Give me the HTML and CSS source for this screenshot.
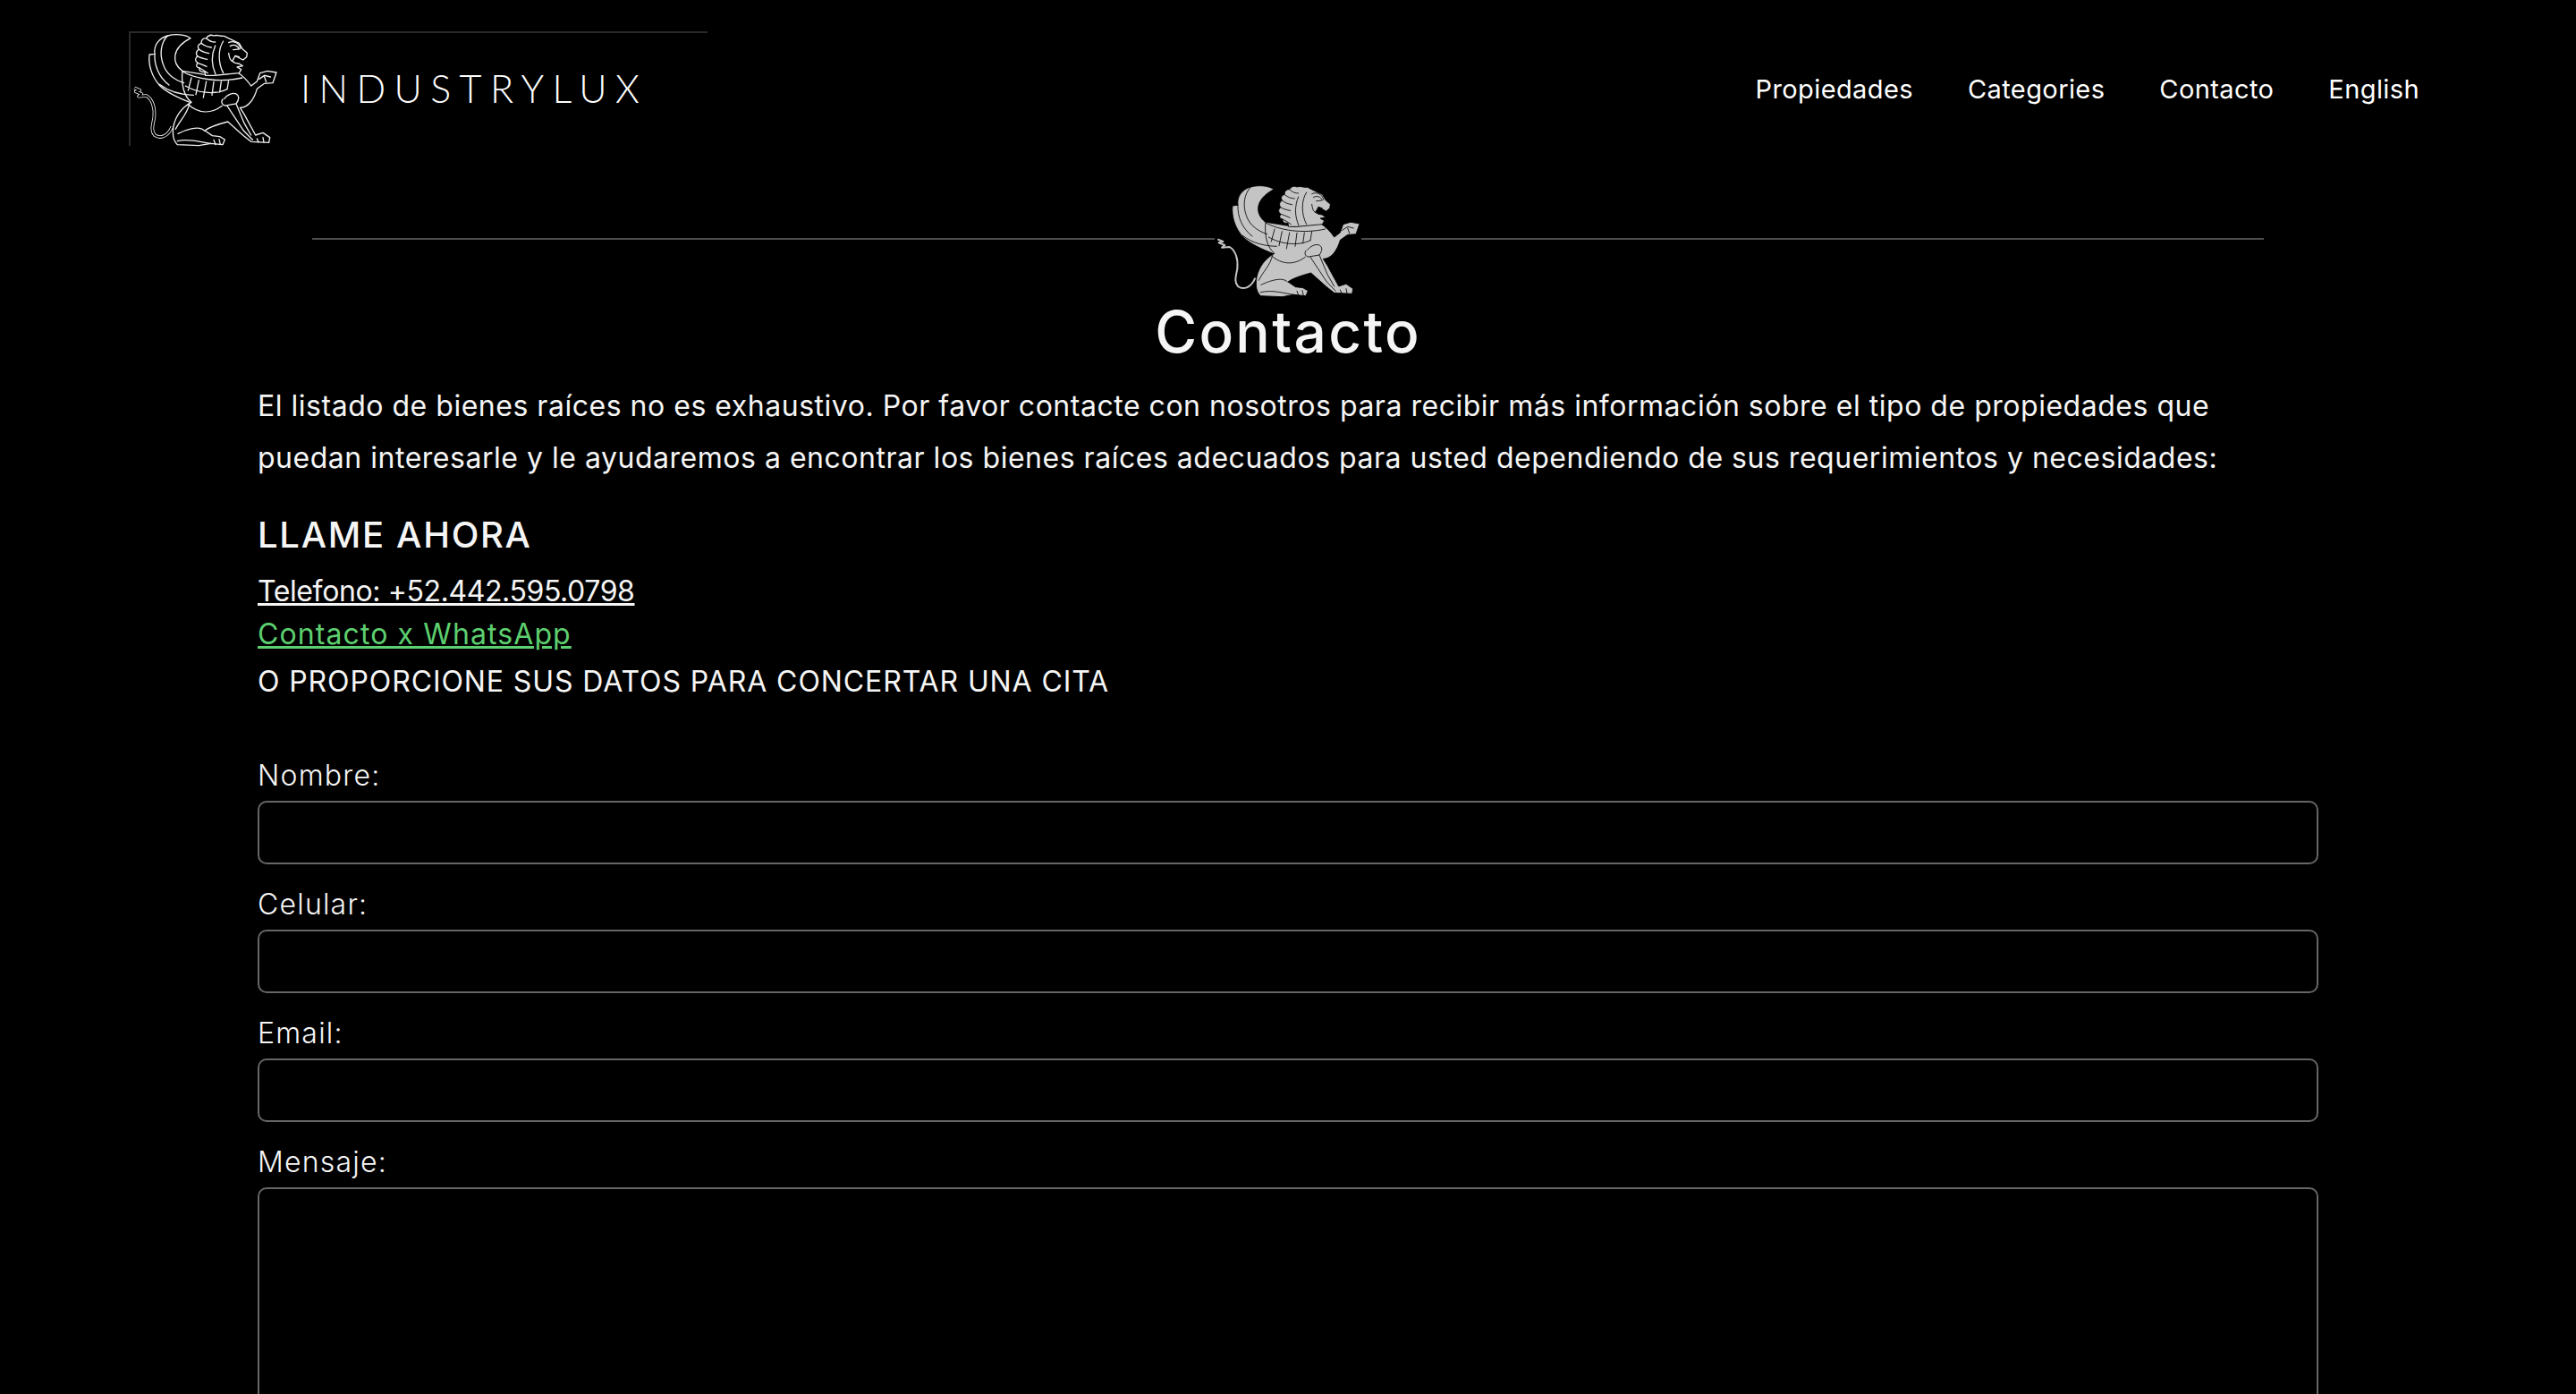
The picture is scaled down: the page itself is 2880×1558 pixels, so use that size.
FILE: index.html
```html
<!DOCTYPE html>
<html lang="es">
<head>
  <meta charset="UTF-8">
  <title>Contacto - Industrylux</title>
  <link rel="stylesheet" href="styles.css">
</head>
<body>
  <svg class="defs" width="0" height="0">
    <symbol id="lion" viewBox="0 0 540 405">
      <path class="tail-out" d="M34 202 L52 210 L38 214 L58 222 L48 230 L74 228 C95 240 103 270 100 300 C96 325 88 345 102 360 C118 372 145 368 160 332"/>
      <path class="tail-in" d="M34 202 L52 210 L38 214 L58 222 L48 230 L74 228 C95 240 103 270 100 300 C96 325 88 345 102 360 C118 372 145 368 160 332"/>
      <!-- wing -->
      <path class="part" d="M145 27 C115 35 98 60 102 88 L84 90 C80 125 92 165 120 195 C140 215 180 235 225 252 L310 230 L230 160 L195 145 C160 120 155 70 222 35 C205 22 170 20 145 27 Z"/>
      <!-- body and legs -->
      <path class="part" d="M225 250 C195 265 172 295 165 330 C160 360 165 380 178 392 L250 395 L290 388 L330 392 L337 375 L320 365 L295 362 L270 345 C285 333 320 322 347 315 L400 362 L425 382 L485 385 L488 368 L465 352 L440 360 L402 290 L388 268 C415 268 435 240 445 205 L470 187 L498 185 L510 150 L480 145 L455 152 L445 180 L425 195 C412 175 395 160 380 150 L290 160 L195 145 C190 190 200 230 225 250 Z"/>
      <!-- mane and head -->
      <path class="part" d="M300 27 Q285 20 275 35 Q258 35 258 52 Q242 58 250 72 Q236 82 245 95 Q232 108 246 118 Q236 132 252 135 Q250 150 270 148 L272 160 L300 160 L385 152 L392 140 L378 132 L397 128 L384 120 L372 118 L362 112 L372 94 L398 108 L410 98 L412 85 L397 72 L385 52 L355 38 L335 28 C322 30 312 22 300 27 Z"/>
      <path class="line" d="M145 27 C122 50 118 90 130 122 C138 148 160 172 200 185 M102 88 C100 125 115 165 150 192 M118 190 C150 215 190 225 232 226"/>
      <path class="line" d="M195 147 C240 172 320 185 395 168 M225 168 L214 210 M250 176 L240 224 M275 180 L265 234 M300 181 L294 226 M325 180 L320 216 M350 176 L345 206 M205 195 C240 216 300 228 345 206"/>
      <path class="line" d="M335 238 C362 205 400 222 375 255 L345 260 C330 265 322 250 330 240 M345 262 L400 345 L430 376 M375 255 L402 320 L425 360"/>
      <path class="line" d="M218 256 C210 292 186 310 172 340 M215 258 C250 288 290 290 328 262 M180 355 C200 345 250 325 268 345 M178 380 C220 370 260 385 290 388 M300 376 L306 392 M318 374 L322 392 M445 372 L450 384 M465 368 L468 384"/>
      <!-- mane strands -->
      <path class="line" d="M275 35 C285 45 295 48 305 48 M258 52 C270 62 280 65 292 66 M250 72 C262 82 272 84 284 86 M245 95 C256 102 266 104 278 106 M246 118 C258 122 268 126 276 130 M252 135 C262 140 272 146 280 152"/>
      <path class="line" d="M332 45 C314 72 314 118 332 152 M305 60 C292 90 292 125 306 156"/>
      <!-- face and paw -->
      <path class="line" d="M350 50 C365 42 385 50 390 70 M355 62 C365 55 380 58 385 72 L365 74 M350 85 C352 100 355 110 362 112 M372 94 L385 98 M452 172 L470 160 L490 165 M470 165 L476 182"/>
    </symbol>
  </svg>

  <header class="site-header">
    <a class="logo" href="#">
      <svg class="logo-lion" viewBox="21 15 495 384"><use href="#lion" width="540" height="405"/></svg>
      <span class="logo-text">INDUSTRYLUX</span>
    </a>
    <nav class="main-nav">
      <a href="#">Propiedades</a>
      <a href="#">Categories</a>
      <a href="#">Contacto</a>
      <a href="#">English</a>
    </nav>
  </header>

  <main class="container">
    <div class="divider">
      <span class="divider-line"></span>
      <svg class="divider-lion" viewBox="24 0 492 405"><use href="#lion" width="540" height="405"/></svg>
      <span class="divider-line"></span>
    </div>
    <h1>Contacto</h1>
    <p class="intro">El listado de bienes raíces no es exhaustivo. Por favor contacte con nosotros para recibir más información sobre el tipo de propiedades que puedan interesarle y le ayudaremos a encontrar los bienes raíces adecuados para usted dependiendo de sus requerimientos y necesidades:</p>
    <h2>LLAME AHORA</h2>
    <a class="contact-link phone" href="#">Telefono: +52.442.595.0798</a>
    <a class="contact-link whatsapp" href="#">Contacto x WhatsApp</a>
    <p class="form-note">O PROPORCIONE SUS DATOS PARA CONCERTAR UNA CITA</p>
    <form class="contact-form">
      <label for="nombre">Nombre:</label>
      <input id="nombre" type="text">
      <label for="celular">Celular:</label>
      <input id="celular" type="text">
      <label for="email">Email:</label>
      <input id="email" type="text">
      <label for="mensaje">Mensaje:</label>
      <textarea id="mensaje"></textarea>
    </form>
  </main>
</body>
</html>
```

FILE: styles.css
```css
* {
  box-sizing: border-box;
}
html, body {
  height: 1558px;
  overflow: hidden;
}
body {
  margin: 0;
  background: #000;
  color: #f5f5f5;
  font-family: Inter, 'Noto Sans', sans-serif;
}
a {
  color: inherit;
}
.defs {
  position: absolute;
}
.part {
  fill: var(--lion-fill);
  stroke: var(--lion-line);
  stroke-width: var(--lion-stroke);
  stroke-linejoin: round;
}
.line {
  fill: none;
  stroke: var(--lion-line);
  stroke-width: var(--lion-stroke);
  stroke-linecap: round;
}
.tail-out, .tail-in {
  fill: none;
  stroke-linejoin: round;
}
.tail-out {
  stroke: var(--lion-line);
  stroke-width: 11;
}
.tail-in {
  stroke: var(--lion-fill);
  stroke-width: 6;
}
.site-header {
  height: 200px;
  padding: 35px 175px 37px 144px;
  display: flex;
  justify-content: space-between;
  align-items: center;
}
.logo {
  width: 647px;
  height: 128px;
  display: flex;
  align-items: center;
  gap: 25px;
  border-top: 2px solid #2a2a2a;
  border-left: 2px solid #2a2a2a;
  text-decoration: none;
  --lion-fill: #000;
  --lion-line: #f0f0f0;
  --lion-stroke: 4;
}
.logo-lion {
  width: 165px;
  height: 128px;
  flex: none;
}
.logo-text {
  margin-bottom: 3px;
  font-family: Lato, sans-serif;
  font-weight: 300;
  font-size: 43px;
  letter-spacing: 9.4px;
  color: #fff;
}
.main-nav {
  display: flex;
  gap: 61px;
}
.main-nav a {
  padding-top: 2px;
  font-size: 29px;
  line-height: 40px;
  letter-spacing: 0.4px;
  text-decoration: none;
  color: #fff;
}
.container {
  margin: 0 288px;
}
.divider {
  margin: 0 61px;
  height: 135px;
  display: flex;
  align-items: center;
  --lion-fill: #c4c4c4;
  --lion-line: #000;
  --lion-stroke: 2.5;
}
.divider-line {
  flex: 1;
  height: 2px;
  margin-bottom: 2px;
  background: #4d4d4d;
}
.divider-lion {
  width: 164px;
  height: 135px;
  flex: none;
}
h1 {
  margin: 0;
  text-align: center;
  font-size: 64px;
  line-height: 72px;
  letter-spacing: 2.3px;
  font-weight: 500;
}
.intro {
  margin: 18px 0 0;
  font-size: 32px;
  line-height: 58px;
  letter-spacing: 0.52px;
  font-weight: 400;
}
h2 {
  margin: 32px 0 0;
  font-size: 40px;
  line-height: 50px;
  letter-spacing: 1.7px;
  font-weight: 500;
}
.contact-link {
  display: block;
  font-size: 32px;
  line-height: 48px;
}
.phone {
  margin-top: 14px;
  letter-spacing: -0.4px;
}
.whatsapp {
  color: #5dcf6f;
  letter-spacing: 1.1px;
}
.form-note {
  margin: 5px 0 0;
  font-size: 32px;
  line-height: 48px;
  letter-spacing: 0.9px;
}
.contact-form {
  margin-top: 57px;
  display: flex;
  flex-direction: column;
}
label {
  font-size: 32px;
  line-height: 48px;
  letter-spacing: 1.2px;
  font-weight: 300;
  margin-bottom: 4px;
}
input, textarea {
  display: block;
  width: 100%;
  background: #000;
  border: 2px solid #666;
  border-radius: 10px;
  color: #fff;
}
input {
  height: 71px;
  margin-bottom: 21px;
}
textarea {
  height: 400px;
}
```
